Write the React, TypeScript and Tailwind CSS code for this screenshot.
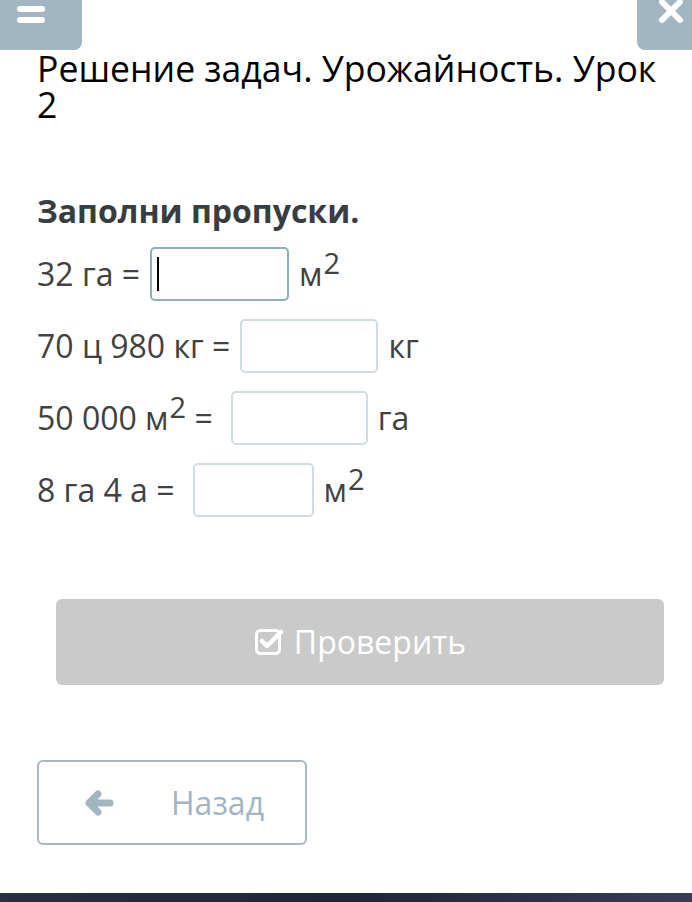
import React from 'react';

const Sq = () => <sup className="text-[29px] relative -top-[12px] ml-[1px]">2</sup>;

const rows = [
  { left: <>32 га =</>, unit: <>м<Sq /></>, w: 'w-[139px]', extra: '', focus: true },
  { left: <>70 ц 980 кг =</>, unit: <>кг</>, w: 'w-[138px]', extra: '', focus: false },
  { left: <>50 000 м<Sq /> =</>, unit: <>га</>, w: 'w-[137px]', extra: 'ml-[8px]', focus: false },
  { left: <>8 га 4 а =</>, unit: <>м<Sq /></>, w: 'w-[121px]', extra: 'ml-[8px]', focus: false },
];

const App: React.FC = () => {
  return (
    <div className="w-[692px] h-[902px] bg-white flex flex-col overflow-hidden" style={{ fontFamily: '"Open Sans", sans-serif' }}>
      <div className="flex justify-between h-[50px]">
        <div className="w-[82px] h-[50px] bg-[#a2b5c3] rounded-br-[8px] flex items-start justify-center">
          <div className="flex flex-col gap-[5px] mt-[6px] ml-[-20px]">
            <div className="w-[28px] h-[6px] bg-white rounded-sm" />
            <div className="w-[28px] h-[6px] bg-white rounded-sm" />
          </div>
        </div>
        <div className="w-[55px] h-[50px] bg-[#a2b5c3] rounded-bl-[8px] flex items-start justify-center">
          <svg width="30" height="30" viewBox="0 0 30 30" className="mt-[-4px] ml-[12px]">
            <path d="M6 6 L24 24 M24 6 L6 24" stroke="white" strokeWidth="6" strokeLinecap="round" />
          </svg>
        </div>
      </div>

      <h1 className="pl-[37px] pr-[20px] text-[35.6px] leading-[36px] text-black mt-[0px]">Решение задач. Урожайность. Урок 2</h1>

      <h2 className="px-[37px] mt-[69px] text-[32px] leading-[40px] font-bold text-[#383d42]">Заполни пропуски.</h2>

      <div className="px-[37px] mt-[16px] flex flex-col gap-[18px] text-[32px] text-[#414141]">
        {rows.map((r, i) => (
          <div key={i} className="flex items-center h-[54px] gap-[10px]">
            <span className="whitespace-nowrap leading-none">{r.left}</span>
            <div
              className={`${r.w} ${r.extra} h-[54px] rounded-[5px] bg-white flex items-center ${
                r.focus ? 'border-2 border-[#8cb0b4] pl-[5px]' : 'border-2 border-[#cfdde0]'
              }`}
            >
              {r.focus && <div className="w-[2px] h-[34px] bg-black" />}
            </div>
            <span className="whitespace-nowrap leading-none">{r.unit}</span>
          </div>
        ))}
      </div>

      <div className="pl-[56px] pr-[28px] mt-[82px]">
        <button className="w-full h-[86px] rounded-[6px] bg-[#cacaca] text-white text-[32px] flex items-center justify-center gap-[10px]">
          <svg width="30" height="30" viewBox="0 0 30 30">
            <rect x="2.5" y="3.5" width="23" height="23" rx="4" fill="none" stroke="white" strokeWidth="3" />
            <path d="M8 14 L13 19 L27 5" fill="none" stroke="white" strokeWidth="4.5" strokeLinecap="round" strokeLinejoin="round" />
          </svg>
          <span>Проверить</span>
        </button>
      </div>

      <div className="px-[37px] mt-[75px]">
        <button className="w-[270px] h-[85px] rounded-[6px] border-2 border-[#a9b6bd] bg-white flex items-center pl-[45px]">
          <svg width="30" height="26" viewBox="0 0 30 26">
            <path d="M14 4 L5 13 L14 22 M5 13 L26 13" fill="none" stroke="#a2b5c3" strokeWidth="7" strokeLinecap="round" strokeLinejoin="round" />
          </svg>
          <span className="ml-[57px] text-[32px] text-[#a2b5c3]">Назад</span>
        </button>
      </div>

      <div className="mt-auto h-[9px] bg-gradient-to-r from-[#2a2e45] via-[#20233a] to-[#3a3d55]" />
    </div>
  );
};

export default App;
